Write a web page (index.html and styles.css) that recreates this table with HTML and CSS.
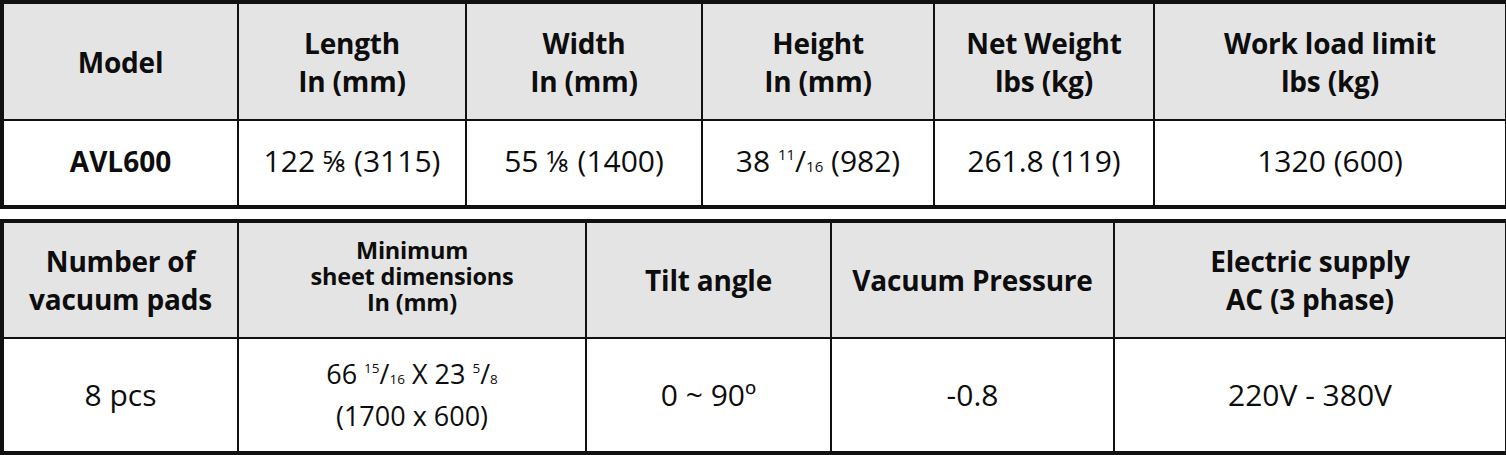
FILE: index.html
```html
<!DOCTYPE html>
<html lang="en">

<head>
    <meta charset="UTF-8" />
    <meta name="viewport" content="width=device-width, initial-scale=1.0" />
    <title>AVL600 Specifications</title>
    <link rel="stylesheet" href="styles.css">
</head>

<body>

    <!-- dimensions / weight -->
    <table class="spec spec-top">
        <colgroup>
            <col class="c-model">
            <col class="c-length">
            <col class="c-width">
            <col class="c-height">
            <col class="c-weight">
            <col class="c-load">
        </colgroup>
        <tr class="head">
            <th>Model</th>
            <th>Length<br>In (mm)</th>
            <th>Width<br>In (mm)</th>
            <th>Height<br>In (mm)</th>
            <th>Net Weight<br>lbs (kg)</th>
            <th>Work load limit<br>lbs (kg)</th>
        </tr>
        <tr class="body">
            <td class="model">AVL600</td>
            <td>122 <span class="frac">⅝</span> (3115)</td>
            <td>55 <span class="frac">⅛</span> (1400)</td>
            <td>38 <sup>11</sup>/<sub>16</sub> (982)</td>
            <td>261.8 (119)</td>
            <td>1320 (600)</td>
        </tr>
    </table>

    <!-- pads / supply -->
    <table class="spec spec-bottom">
        <colgroup>
            <col class="c-pads">
            <col class="c-sheet">
            <col class="c-tilt">
            <col class="c-vac">
            <col class="c-supply">
        </colgroup>
        <tr class="head">
            <th>Number of<br>vacuum pads</th>
            <th class="small">Minimum<br>sheet dimensions<br>In (mm)</th>
            <th>Tilt angle</th>
            <th>Vacuum Pressure</th>
            <th>Electric supply<br>AC (3 phase)</th>
        </tr>
        <tr class="body">
            <td>8 pcs</td>
            <td class="sheet">66 <sup>15</sup>/<sub>16</sub> X 23 <sup>5</sup>/<sub>8</sub><br>(1700 x 600)</td>
            <td>0 ~ 90º</td>
            <td>-0.8</td>
            <td>220V - 380V</td>
        </tr>
    </table>

</body>

</html>
```

FILE: styles.css
```css
html,
body {
    margin: 0;
    padding: 0;
    background: #fff;
    color: #0d0d0d;
    font-family: "Open Sans", "Noto Sans", "DejaVu Sans", sans-serif;
}

.spec {
    width: 1505px;
    table-layout: fixed;
    border-collapse: collapse;
    border: 4px solid #111;
}

.spec-bottom {
    margin-top: 10px;
}

.spec th,
.spec td {
    border: 2px solid #111;
    text-align: center;
    vertical-align: middle;
    padding: 0;
}

.spec th {
    background: #e4e4e4;
    font-size: 28px;
    font-weight: bold;
    line-height: 38px;
    letter-spacing: -0.2px;
}

.spec td {
    font-size: 30px;
    font-weight: normal;
    line-height: 42px;
}

.spec-top td {
    padding-bottom: 5px;
}

.spec td.model {
    font-weight: bold;
    font-size: 28px;
}

.spec td.sheet {
    font-size: 27px;
    line-height: 42px;
}

.spec th.small {
    font-size: 23.5px;
    line-height: 26px;
    padding-bottom: 8px;
}

.spec-top .head {
    height: 118px;
}

.spec-top .body {
    height: 87px;
}

.spec-bottom .head {
    height: 117px;
}

.spec-bottom .body {
    height: 115px;
}

/* column widths */
.c-model { width: 236px; }
.c-length { width: 228px; }
.c-width { width: 236px; }
.c-height { width: 232px; }
.c-weight { width: 220px; }
.c-load { width: 353px; }

.c-pads { width: 236px; }
.c-sheet { width: 348px; }
.c-tilt { width: 245px; }
.c-vac { width: 283px; }
.c-supply { width: 393px; }

.frac {
    font-size: 0.95em;
    line-height: 0;
}

sup,
sub {
    font-size: 0.5em;
    line-height: 0;
}

sup {
    vertical-align: 0.8em;
}

sub {
    vertical-align: 0;
}
```
